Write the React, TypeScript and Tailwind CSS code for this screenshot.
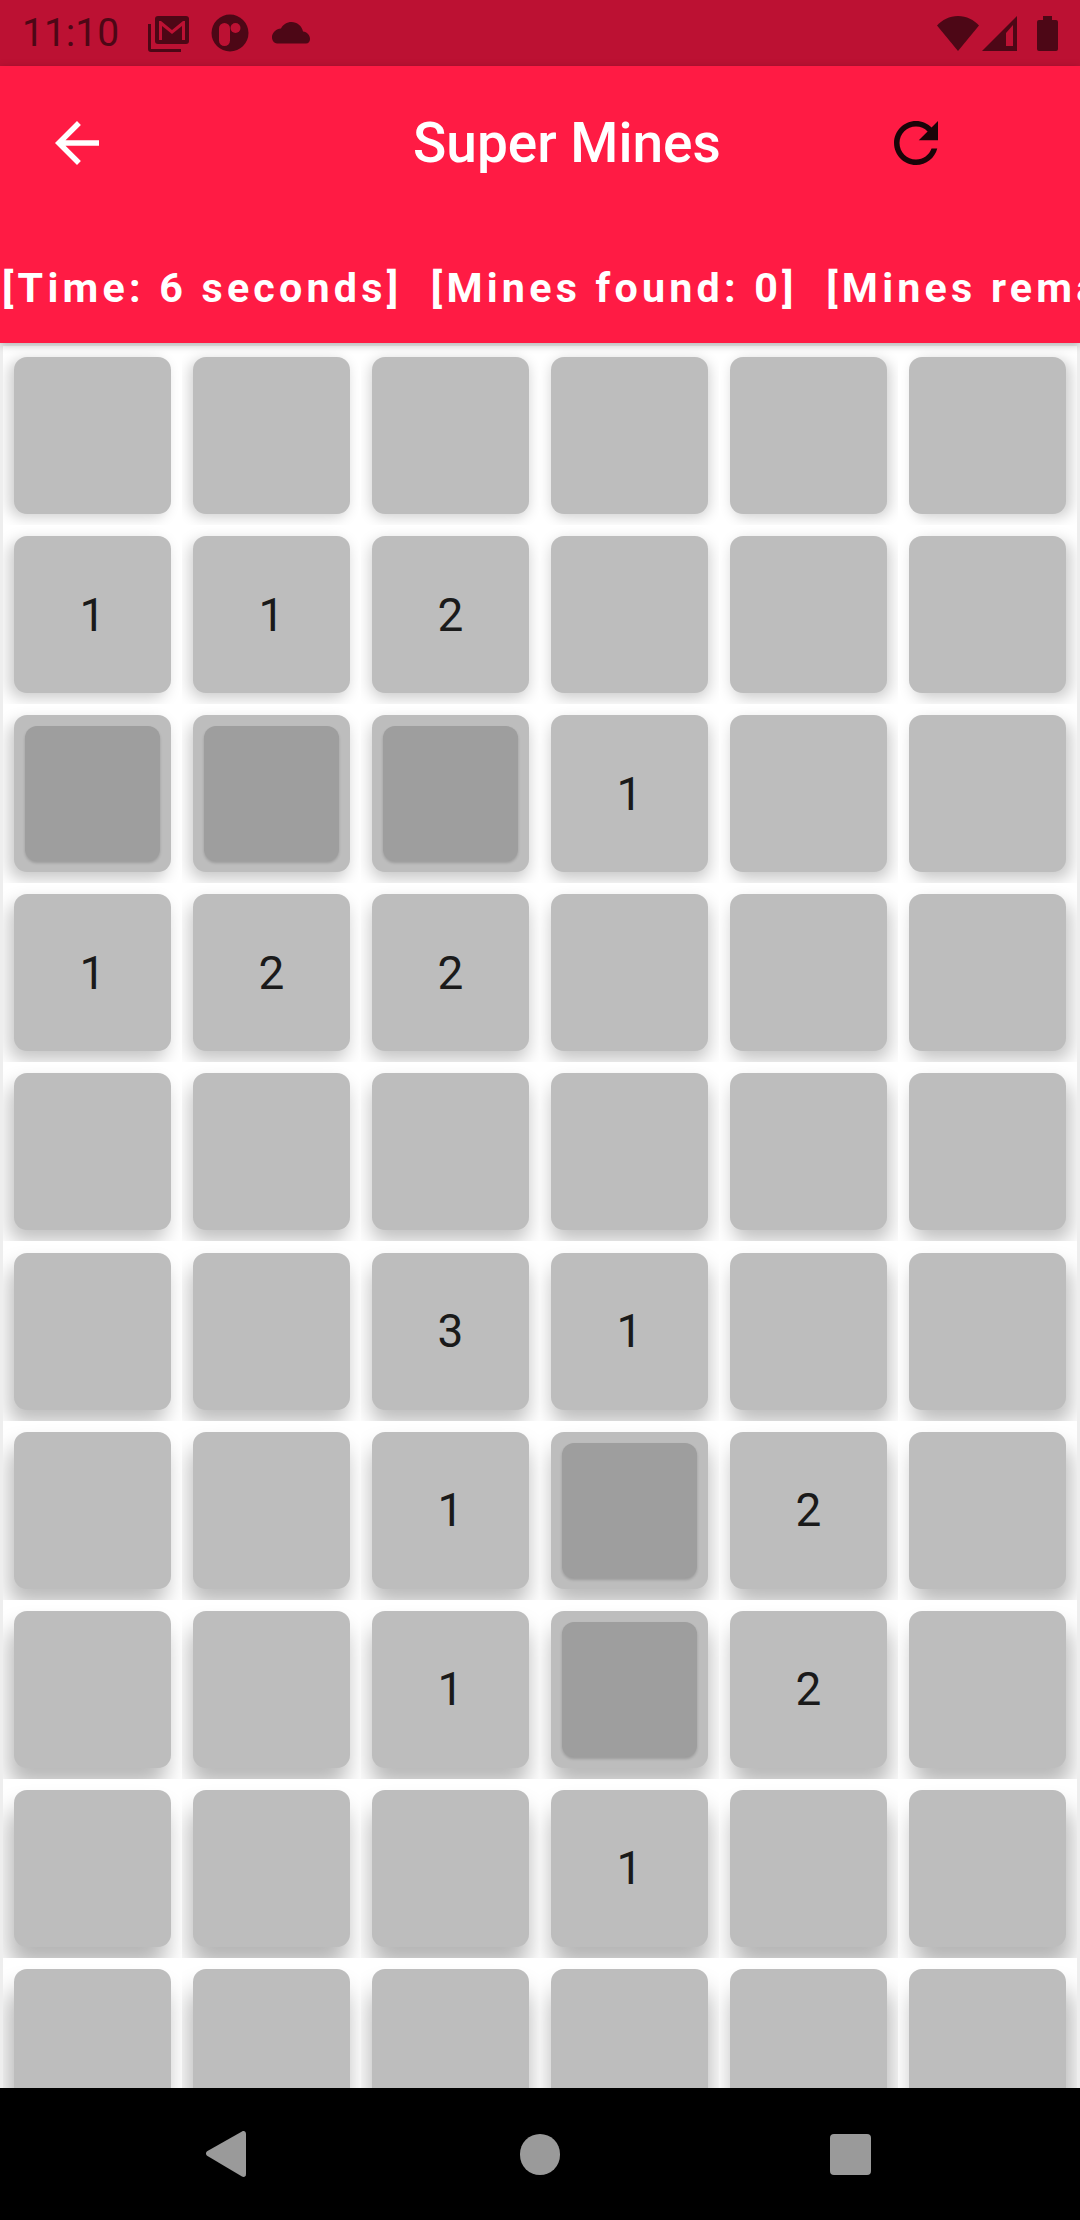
const board: (number | 'x' | null)[][] = [
  [null, null, null, null, null, null],
  [1, 1, 2, null, null, null],
  ['x', 'x', 'x', 1, null, null],
  [1, 2, 2, null, null, null],
  [null, null, null, null, null, null],
  [null, null, 3, 1, null, null],
  [null, null, 1, 'x', 2, null],
  [null, null, 1, 'x', 2, null],
  [null, null, null, 1, null, null],
  [null, null, null, null, null, null],
];

const StatusBar = () => (
  <div className="h-[66px] shrink-0 bg-[#bc1133] flex items-center text-[#4d0716]">
    <span className="ml-[22px] text-[39px] leading-none">11:10</span>
    <svg width="42" height="37" viewBox="0 0 42 37" className="ml-[29px]" fill="currentColor">
      <path d="M0 9h3v25h30v3H3a3 3 0 0 1-3-3z" />
      <rect x="7" y="1" width="34" height="28" rx="3" />
      <path d="M11 25V6h2l11 9 11-9h2v19h-3V11l-10 8-10-8v14z" fill="#bc1133" />
    </svg>
    <svg width="38" height="38" viewBox="0 0 38 38" className="ml-[21px]" fill="currentColor">
      <circle cx="19" cy="19" r="18.5" />
      <rect x="8" y="9" width="11" height="23" rx="5.5" fill="#bc1133" />
      <circle cx="24.5" cy="14" r="5" fill="#bc1133" />
    </svg>
    <svg width="38" height="22" viewBox="0 0 38 22" className="ml-[23px]" fill="currentColor">
      <path d="M31 9.5C30 4 25 0 19.5 0 15 0 11 2.500 9 6.500 4 7 1 10 0 14c-.5 4 2 7.500 5 7.500h29c2.500 0 4-2 4-4.500 0-4-3-7-7-7.500z" />
    </svg>
    <svg width="42" height="35" viewBox="0 0 42 35" className="ml-auto" fill="currentColor">
      <path d="M21 35 0 9.500C5 4 12.500 0 21 0s16 4 21 9.500z" />
    </svg>
    <svg width="35" height="35" viewBox="0 0 35 35" className="ml-[3px]" fill="currentColor">
      <path fillRule="evenodd" d="M35 0v35H0zM24 17v13h7V9z" />
    </svg>
    <svg width="21" height="35" viewBox="0 0 21 35" className="ml-[20px] mr-[22px]" fill="currentColor">
      <path d="M6 0h9v4h4a2 2 0 0 1 2 2v27a2 2 0 0 1-2 2H2a2 2 0 0 1-2-2V6a2 2 0 0 1 2-2h4z" />
    </svg>
  </div>
);

const Header = () => (
  <div className="h-[277px] shrink-0 bg-[#ff1b44] relative z-10 shadow-[0_2px_8px_rgba(0,0,0,0.25)]">
    <div className="h-[154px] pt-[44px] flex items-start">
      <svg width="66" height="66" viewBox="0 0 24 24" className="ml-[44px]" fill="#ffffff">
        <path d="M20 11H7.830l5.590-5.590L12 4l-8 8 8 8 1.410-1.410L7.830 13H20v-2z" />
      </svg>
      <h1 className="ml-[303px] text-[55px] leading-[66px] font-medium text-white whitespace-nowrap">Super Mines</h1>
      <svg width="66" height="66" viewBox="0 0 24 24" className="ml-auto mr-[131px]" fill="#1a0408">
        <path d="M17.650 6.350C16.200 4.900 14.210 4 12 4c-4.420 0-7.990 3.580-7.990 8s3.570 8 7.990 8c3.730 0 6.840-2.550 7.730-6h-2.080c-.82 2.330-3.040 4-5.650 4-3.310 0-6-2.690-6-6s2.690-6 6-6c1.660 0 3.140.69 4.220 1.780L13 11h7V4l-2.350 2.350z" />
      </svg>
    </div>
    <div className="mt-[44px] pl-[2px] flex gap-[28.5px] overflow-hidden whitespace-nowrap text-[41.25px] leading-[48px] font-bold tracking-[4.2px] text-white">
      <span className="shrink-0">[Time: 6 seconds]</span>
      <span className="shrink-0">[Mines found: 0]</span>
      <span className="shrink-0">[Mines remaining: 10]</span>
    </div>
  </div>
);

// Android elevation: the light sits above the screen, so shadows grow and spread further down
const tileShadow = (row: number, col: number) => {
  const x = (col - 2.5) * 2;
  const y = 3 + row * 2;
  const blur = 14 + row * 1.2;
  return `${x}px ${y}px ${blur}px rgba(0,0,0,${0.2 + row * 0.012})`;
};

const Tile = ({ value, row, col }: { value: number | 'x' | null; row: number; col: number }) => (
  <div className="bg-white overflow-hidden flex items-center justify-center">
    <div
      className="w-[157px] h-[157px] rounded-[13px] bg-[#bdbdbd] flex items-center justify-center text-[46px] leading-none text-[#1a1a1a]"
      style={{ boxShadow: tileShadow(row, col) }}
    >
      {value === 'x' ? (
        <div className="w-[135px] h-[135px] rounded-[12px] bg-[#9e9e9e] shadow-[0_2px_3px_rgba(0,0,0,0.18)]" />
      ) : (
        value
      )}
    </div>
  </div>
);

const NavBar = () => (
  <div className="h-[132px] shrink-0 bg-black flex items-center relative">
    <svg width="40" height="46" viewBox="0 0 40 46" className="ml-[206px] mb-[1px]" fill="#9a9a9a">
      <path d="M36 .5c2-1 4 0 4 2.500v40c0 2.500-2 3.500-4 2.500L1.500 25c-2-1.200-2-3.800 0-5z" />
    </svg>
    <div className="ml-[274px] w-[40px] h-[41px] rounded-full bg-[#9a9a9a]" />
    <div className="ml-[270px] w-[41px] h-[41px] rounded-[4px] bg-[#9a9a9a]" />
  </div>
);

const App = () => {
  return (
    <div className="w-[1080px] h-[2220px] flex flex-col overflow-hidden bg-[#eeeeee] font-['Roboto',sans-serif]">
      <StatusBar />
      <Header />
      <div className="flex-1 min-h-0 overflow-hidden pt-[3px] pl-[3px] grid grid-cols-[repeat(6,179px)] auto-rows-[179.100px]">
        {board.map((cells, row) =>
          cells.map((value, col) => <Tile key={`${row}-${col}`} value={value} row={row} col={col} />)
        )}
      </div>
      <NavBar />
    </div>
  );
};

export default App;
